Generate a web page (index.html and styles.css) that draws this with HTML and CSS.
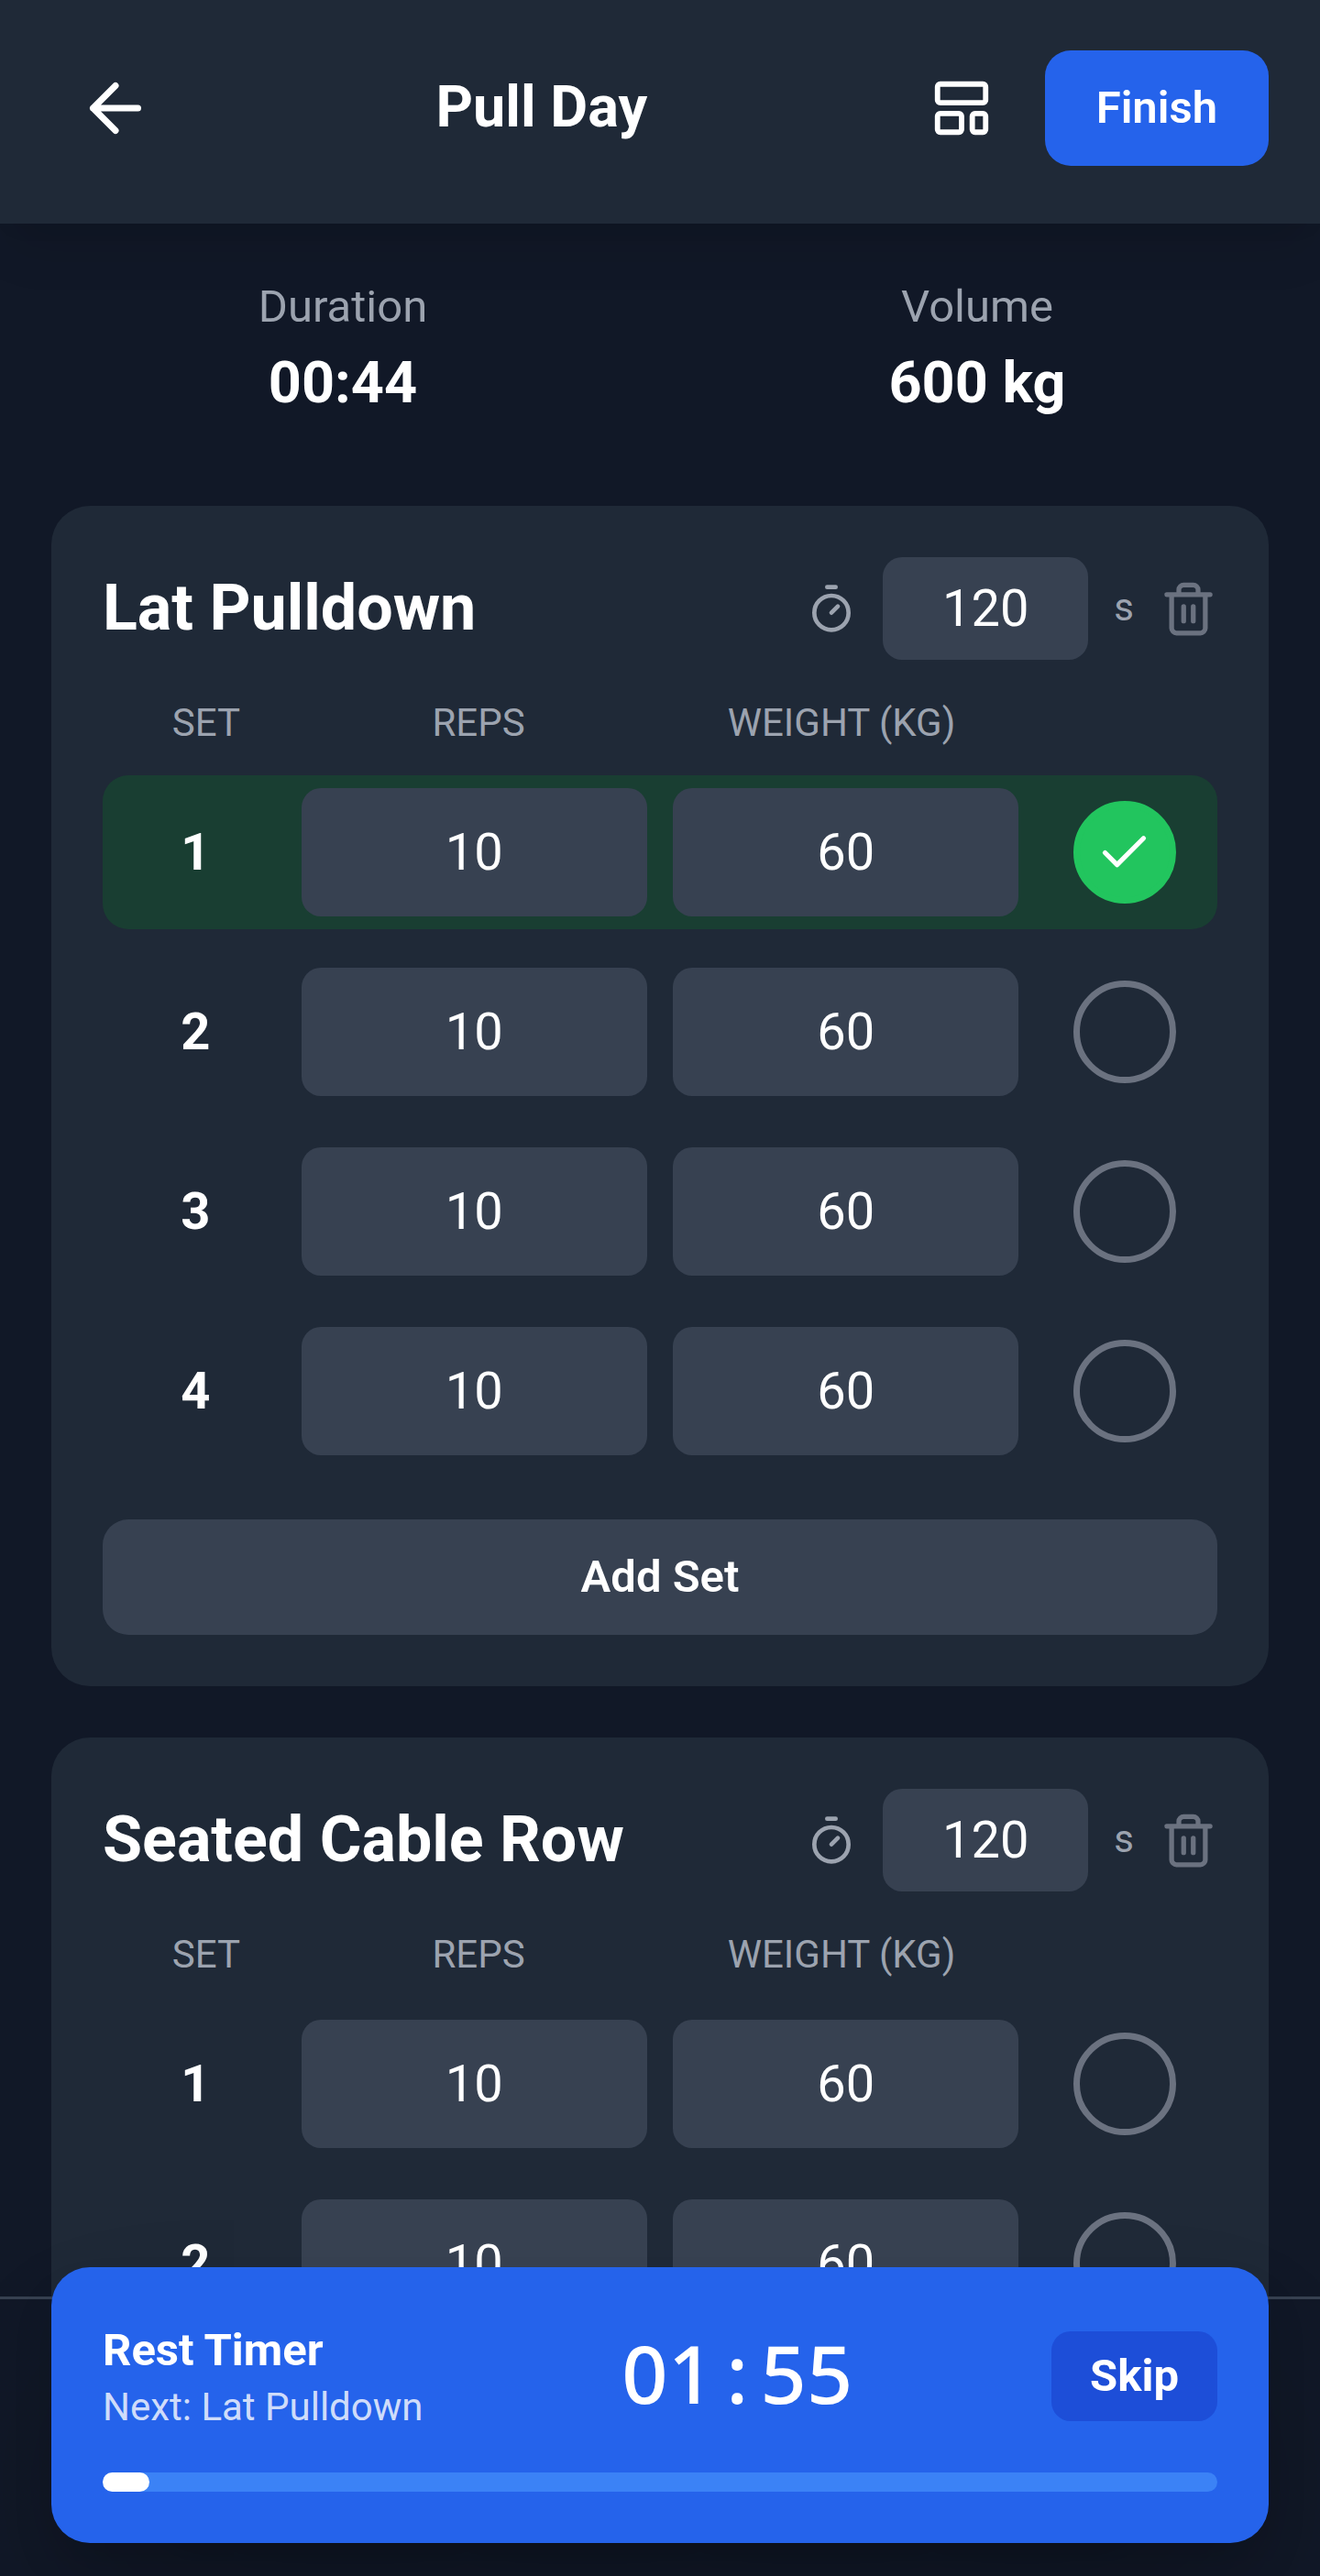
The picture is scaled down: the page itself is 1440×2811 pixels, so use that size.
FILE: index.html
```html
<!DOCTYPE html>
<html lang="en">
<head>
<meta charset="utf-8">
<title>Pull Day</title>
<link rel="stylesheet" href="styles.css">
</head>
<body>
<svg class="sprite" aria-hidden="true">
  <symbol id="timer" viewBox="0 0 24 24"><path d="M10 2h4M12 14l3-3"/><circle cx="12" cy="14" r="8"/></symbol>
  <symbol id="trash" viewBox="0 0 24 24"><path d="M3 6h18M19 6v14c0 1-1 2-2 2H7c-1 0-2-1-2-2V6M8 6V4c0-1 1-2 2-2h4c1 0 2 1 2 2v2M10 11v6M14 11v6"/></symbol>
</svg>
<div class="app">
  <header class="topbar">
    <div class="icon-btn"><svg class="icon icon-back" viewBox="0 0 24 24"><path d="m12 19-7-7 7-7M19 12H5"/></svg></div>
    <h1 class="title">Pull Day</h1>
    <div class="actions">
      <div class="icon-btn"><svg class="icon icon-layout" viewBox="0 0 24 24"><rect x="3" y="3" width="18" height="7" rx="1"/><rect x="3" y="14" width="9" height="7" rx="1"/><rect x="16" y="14" width="5" height="7" rx="1"/></svg></div>
      <div class="finish">Finish</div>
    </div>
  </header>

  <section class="stats">
    <div><div class="stat-label">Duration</div><div class="stat-value">00:44</div></div>
    <div><div class="stat-label">Volume</div><div class="stat-value">600 kg</div></div>
  </section>

  <main class="exercises">
    <article class="card">
      <div class="card-head">
        <h2 class="card-title">Lat Pulldown</h2>
        <div class="rest">
          <svg class="icon icon-timer"><use href="#timer"/></svg>
          <div class="rest-input">120</div>
          <span class="unit">s</span>
          <svg class="icon icon-trash"><use href="#trash"/></svg>
        </div>
      </div>
      <div class="cols"><span>SET</span><span>REPS</span><span>WEIGHT (KG)</span></div>
      <div class="rows">
        <div class="row done"><b class="num">1</b><div class="field">10</div><div class="field">60</div><div class="check"><svg class="icon icon-check" viewBox="0 0 24 24"><path d="M20 6 9 17l-5-5"/></svg></div></div>
        <div class="row"><b class="num">2</b><div class="field">10</div><div class="field">60</div><div class="check"></div></div>
        <div class="row"><b class="num">3</b><div class="field">10</div><div class="field">60</div><div class="check"></div></div>
        <div class="row"><b class="num">4</b><div class="field">10</div><div class="field">60</div><div class="check"></div></div>
      </div>
      <div class="add">Add Set</div>
    </article>

    <article class="card">
      <div class="card-head">
        <h2 class="card-title">Seated Cable Row</h2>
        <div class="rest">
          <svg class="icon icon-timer"><use href="#timer"/></svg>
          <div class="rest-input">120</div>
          <span class="unit">s</span>
          <svg class="icon icon-trash"><use href="#trash"/></svg>
        </div>
      </div>
      <div class="cols"><span>SET</span><span>REPS</span><span>WEIGHT (KG)</span></div>
      <div class="rows">
        <div class="row"><b class="num">1</b><div class="field">10</div><div class="field">60</div><div class="check"></div></div>
        <div class="row"><b class="num">2</b><div class="field">10</div><div class="field">60</div><div class="check"></div></div>
      </div>
    </article>
  </main>

  <div class="bottom-bar"></div>
  <aside class="timer">
    <div class="timer-row">
      <div>
        <div class="timer-title">Rest Timer</div>
        <div class="timer-next">Next: Lat Pulldown</div>
      </div>
      <div class="clock">01<span class="colon">:</span>55</div>
      <div class="skip">Skip</div>
    </div>
    <div class="track"><div class="fill" style="width: 4.1667%"></div></div>
  </aside>
</div>
</body>
</html>
```
FILE: styles.css
```css
* { box-sizing: border-box; }

body {
  margin: 0;
  background: #111827;
  color: #fff;
  font-family: Roboto, "Liberation Sans", sans-serif;
}

h1, h2 { margin: 0; }

.sprite { display: none; }

.app {
  position: relative;
  height: 2811px;
  overflow: hidden;
}

.icon {
  display: block;
  flex: none;
  fill: none;
  stroke: currentColor;
  stroke-width: 2;
  stroke-linecap: round;
  stroke-linejoin: round;
}

.icon-back { width: 84px; height: 84px; }
.icon-layout { width: 70px; height: 70px; }
.icon-timer { width: 56px; height: 56px; color: #9ca3af; }
.icon-trash { width: 63px; height: 63px; color: #6b7280; }
.icon-check { width: 63px; height: 63px; }

.topbar {
  position: relative;
  display: flex;
  align-items: center;
  justify-content: space-between;
  height: 244px;
  padding: 55px 56px 63px;
  background: #1f2937;
  box-shadow: 0 35px 52px -10px rgba(0, 0, 0, .1), 0 14px 21px -14px rgba(0, 0, 0, .1);
}

.icon-btn { padding: 28px; }

.title { padding-bottom: 2px; font-size: 63px; line-height: 98px; font-weight: 700; }

.actions { display: flex; align-items: center; gap: 28px; }

.finish {
  padding: 28px 56px;
  border-radius: 28px;
  background: #2563eb;
  font-size: 49px;
  line-height: 70px;
  font-weight: 600;
}

.stats {
  display: grid;
  grid-template-columns: 1fr 1fr;
  padding: 56px 28px 84px;
  text-align: center;
}

.stat-label { color: #9ca3af; font-size: 49px; line-height: 70px; }
.stat-value { padding-bottom: 2px; font-size: 63px; line-height: 96px; font-weight: 700; }

.exercises {
  display: flex;
  flex-direction: column;
  gap: 56px;
  padding: 0 56px;
}

.card { padding: 56px; border-radius: 42px; background: #1f2937; }

.card-head {
  display: flex;
  align-items: center;
  justify-content: space-between;
  margin-bottom: 42px;
}

.card-title { padding-bottom: 2px; font-size: 70px; line-height: 98px; font-weight: 700; }

.rest { display: flex; align-items: center; gap: 28px; }

.rest-input {
  width: 224px;
  border-radius: 21px;
  background: #374151;
  font-size: 56px;
  line-height: 112px;
  text-align: center;
}

.unit { padding-bottom: 2px; color: #9ca3af; font-size: 42px; line-height: 56px; }

.cols, .row {
  display: grid;
  grid-template-columns: repeat(12, 1fr);
  column-gap: 28px;
  align-items: center;
  text-align: center;
}

.cols {
  margin-bottom: 28px;
  padding: 0 28px 2px;
  color: #9ca3af;
  font-size: 42px;
  line-height: 54px;
}

.cols > :nth-child(1), .num { grid-column: span 2; }
.cols > :nth-child(n+2), .field { grid-column: span 4; }

.rows { display: flex; flex-direction: column; gap: 28px; }

.row { padding: 14px; border-radius: 28px; font-size: 56px; }
.row.done { background: rgba(20, 83, 45, .5); }

.num { font-weight: 700; }

.field { border-radius: 21px; background: #374151; line-height: 140px; }

.check {
  grid-column: span 2;
  justify-self: center;
  display: flex;
  align-items: center;
  justify-content: center;
  width: 112px;
  height: 112px;
  border: 7px solid #6b7280;
  border-radius: 50%;
}

.done .check { border-color: #22c55e; background: #22c55e; }

.add {
  margin-top: 56px;
  padding: 28px;
  border-radius: 28px;
  background: #374151;
  font-size: 49px;
  line-height: 70px;
  font-weight: 600;
  text-align: center;
}

.bottom-bar {
  position: absolute;
  inset: 2506px 0 0;
  border-top: 3px solid #374151;
  background: #111827;
}

/* floating rest timer over the list */
.timer {
  position: absolute;
  left: 56px;
  right: 56px;
  bottom: 36px;
  padding: 56px;
  border-radius: 42px;
  background: #2563eb;
  box-shadow: 0 87px 175px -42px rgba(0, 0, 0, .25), 0 28px 52px -10px rgba(0, 0, 0, .15);
}

.timer-row {
  display: flex;
  align-items: center;
  justify-content: space-between;
  margin-bottom: 42px;
}

.timer-title { font-size: 49px; line-height: 70px; font-weight: 700; }
.timer-next { padding-bottom: 2px; color: rgba(255, 255, 255, .8); font-size: 42px; line-height: 54px; }

.clock {
  padding-bottom: 8px;
  font-family: "Noto Sans", "Open Sans", sans-serif;
  font-size: 88px;
  line-height: 112px;
  font-weight: 540;
}

.colon { display: inline-block; width: 50.5px; text-align: center; }

.skip {
  padding: 14px 42px;
  border-radius: 21px;
  background: #1d4ed8;
  font-size: 49px;
  line-height: 70px;
  font-weight: 700;
}

.track { height: 21px; border-radius: 11px; background: #3b82f6; }
.fill { height: 100%; border-radius: 11px; background: #fff; }
```
